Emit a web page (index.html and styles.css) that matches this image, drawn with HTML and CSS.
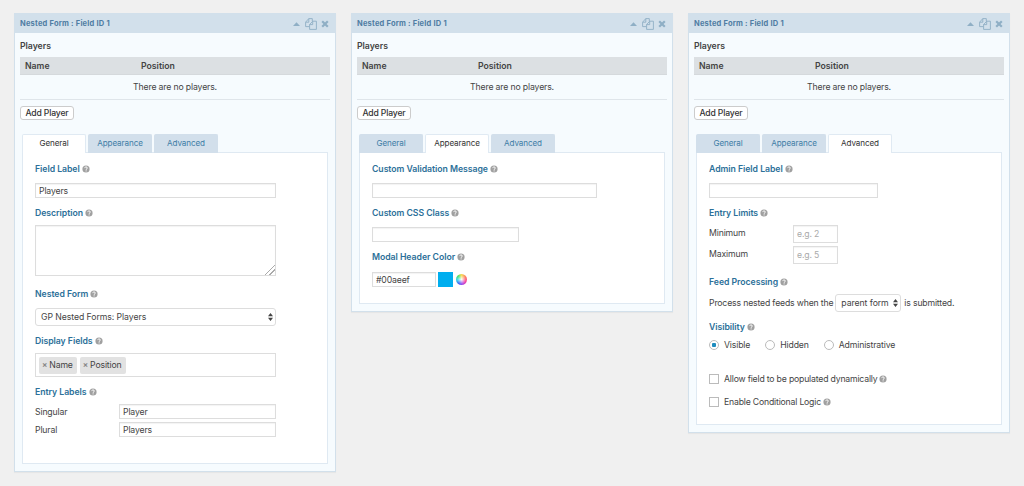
FILE: index.html
```
<!DOCTYPE html>
<html lang="en">
	<head>
		<meta charset="UTF-8" />
		<meta name="viewport" content="width=device-width, initial-scale=1.0" />
		<title>Nested Form Field Settings</title>
		<link rel="stylesheet" href="styles.css">
	</head>
	<body>
		<!-- shared icons -->
		<svg class="sprite" width="0" height="0">
			<symbol id="icon-up" viewBox="0 0 7 4"><path d="M0 4 3.5 0.3 7 4z" fill="currentColor" /></symbol>
			<symbol id="icon-copy" viewBox="0 0 12 12">
				<path d="M4.3 8.6H.6V4.2L3.8.6h3.5v2.6M.6 4.2h3.2V.6M4.6 6.6l3.1-3.4h3.7v8.2H4.6zM4.6 6.6h3.1V3.2" fill="none" stroke="currentColor" stroke-width="0.9" stroke-linejoin="round" />
			</symbol>
			<symbol id="icon-close" viewBox="0 0 8 8"><path d="M1.2 1.2 6.8 6.8M6.8 1.2 1.2 6.8" stroke="currentColor" stroke-width="2.2" /></symbol>
			<symbol id="icon-help" viewBox="0 0 8 8">
				<circle cx="4" cy="4" r="3.6" fill="#a0a0a0" />
				<path d="M2.8 3.1C2.9 2.2 3.4 1.9 4 1.9c.8 0 1.3.5 1.3 1.1C5.3 3.9 4.1 3.9 4.1 4.8M4.1 5.4v1" fill="none" stroke="#fff" stroke-width="1" />
			</symbol>
			<symbol id="icon-sort" viewBox="0 0 5 8"><path d="M0 3.3 2.5 0 5 3.3zM0 4.7h5L2.5 8z" fill="#444" /></symbol>
		</svg>

		<div class="panel">
			<div class="panel-header">
				<span class="panel-title">Nested Form : Field ID 1</span>
				<svg class="icon-up"><use href="#icon-up" /></svg>
				<svg class="icon-copy"><use href="#icon-copy" /></svg>
				<svg class="icon-close"><use href="#icon-close" /></svg>
			</div>
			<div class="panel-body">
				<div class="preview-label">Players</div>
				<div class="table-head"><span>Name</span><span>Position</span></div>
				<div class="table-empty">There are no players.</div>
				<button class="add-btn">Add Player</button>
				<div class="tabs">
					<div class="tab active">General</div>
					<div class="tab">Appearance</div>
					<div class="tab">Advanced</div>
				</div>
				<div class="settings settings-general">
					<div class="label">Field Label <svg class="help"><use href="#icon-help" /></svg></div>
					<input class="input" type="text" value="Players" />

					<div class="label tight">Description <svg class="help"><use href="#icon-help" /></svg></div>
					<textarea class="textarea"></textarea>

					<div class="label nested-label">Nested Form <svg class="help"><use href="#icon-help" /></svg></div>
					<div class="select"><span>GP Nested Forms: Players</span><svg class="sort"><use href="#icon-sort" /></svg></div>

					<div class="label tight">Display Fields <svg class="help"><use href="#icon-help" /></svg></div>
					<div class="tag-box">
						<span class="tag"><i>×</i>Name</span>
						<span class="tag"><i>×</i>Position</span>
					</div>

					<div class="label tight">Entry Labels <svg class="help"><use href="#icon-help" /></svg></div>
					<div class="row"><span>Singular</span><input class="input" type="text" value="Player" /></div>
					<div class="row"><span>Plural</span><input class="input" type="text" value="Players" /></div>
				</div>
			</div>
		</div>

		<div class="panel">
			<div class="panel-header">
				<span class="panel-title">Nested Form : Field ID 1</span>
				<svg class="icon-up"><use href="#icon-up" /></svg>
				<svg class="icon-copy"><use href="#icon-copy" /></svg>
				<svg class="icon-close"><use href="#icon-close" /></svg>
			</div>
			<div class="panel-body">
				<div class="preview-label">Players</div>
				<div class="table-head"><span>Name</span><span>Position</span></div>
				<div class="table-empty">There are no players.</div>
				<button class="add-btn">Add Player</button>
				<div class="tabs">
					<div class="tab">General</div>
					<div class="tab active">Appearance</div>
					<div class="tab">Advanced</div>
				</div>
				<div class="settings settings-appearance">
					<div class="label">Custom Validation Message <svg class="help"><use href="#icon-help" /></svg></div>
					<input class="input input-message" type="text" />

					<div class="label">Custom CSS Class <svg class="help"><use href="#icon-help" /></svg></div>
					<input class="input input-class" type="text" />

					<div class="label">Modal Header Color <svg class="help"><use href="#icon-help" /></svg></div>
					<div class="color-row">
						<input class="input input-color" type="text" value="#00aeef" />
						<span class="swatch"></span>
						<span class="wheel"></span>
					</div>
				</div>
			</div>
		</div>

		<div class="panel">
			<div class="panel-header">
				<span class="panel-title">Nested Form : Field ID 1</span>
				<svg class="icon-up"><use href="#icon-up" /></svg>
				<svg class="icon-copy"><use href="#icon-copy" /></svg>
				<svg class="icon-close"><use href="#icon-close" /></svg>
			</div>
			<div class="panel-body">
				<div class="preview-label">Players</div>
				<div class="table-head"><span>Name</span><span>Position</span></div>
				<div class="table-empty">There are no players.</div>
				<button class="add-btn">Add Player</button>
				<div class="tabs">
					<div class="tab">General</div>
					<div class="tab">Appearance</div>
					<div class="tab active">Advanced</div>
				</div>
				<div class="settings settings-advanced">
					<div class="label">Admin Field Label <svg class="help"><use href="#icon-help" /></svg></div>
					<input class="input input-admin" type="text" />

					<div class="label tight">Entry Limits <svg class="help"><use href="#icon-help" /></svg></div>
					<div class="row limit"><span>Minimum</span><input class="input" type="text" placeholder="e.g. 2" /></div>
					<div class="row limit"><span>Maximum</span><input class="input" type="text" placeholder="e.g. 5" /></div>

					<div class="label tight feed-label">Feed Processing <svg class="help"><use href="#icon-help" /></svg></div>
					<div class="feed-row">
						<span>Process nested feeds when the</span>
						<div class="select"><span>parent form</span><svg class="sort"><use href="#icon-sort" /></svg></div>
						<span>is submitted.</span>
					</div>

					<div class="label tight">Visibility <svg class="help"><use href="#icon-help" /></svg></div>
					<div class="radio-row">
						<label><span class="radio checked"></span>Visible</label>
						<label><span class="radio"></span>Hidden</label>
						<label><span class="radio"></span>Administrative</label>
					</div>

					<div class="check-row"><span class="check"></span>Allow field to be populated dynamically <svg class="help"><use href="#icon-help" /></svg></div>
					<div class="check-row"><span class="check"></span>Enable Conditional Logic <svg class="help"><use href="#icon-help" /></svg></div>
				</div>
			</div>
		</div>
	</body>
</html>
```

FILE: styles.css
```
* {
	box-sizing: border-box;
}

body {
	display: flex;
	align-items: flex-start;
	gap: 15px;
	margin: 0;
	padding: 13px 14px;
	background: #f0f0f0;
	color: #444;
	font-family: Inter, "Liberation Sans", sans-serif;
	font-size: 8.7px;
	letter-spacing: -0.15px;
	line-height: 12px;
}

.sprite {
	position: absolute;
}

.panel {
	width: 322px;
	flex: none;
	background: #f6fbfe;
	border: 1px solid #d2e0eb;
	box-shadow: 0 1px 1px rgba(0, 0, 0, 0.04);
}

.panel-header {
	display: flex;
	align-items: center;
	height: 19px;
	padding: 0 6px 0 5px;
	background: #d2e0eb;
	color: #8fafc5;
}

.panel-title {
	flex: 1;
	color: #4f7da3;
	font-size: 7.5px;
	font-weight: 700;
	letter-spacing: 0.21px;
}

.icon-up {
	width: 7px;
	height: 4px;
	margin-right: 5px;
}

.icon-copy {
	width: 12px;
	height: 12px;
	margin-right: 4px;
}

.icon-close {
	width: 8px;
	height: 8px;
}

.panel-body {
	padding: 7px 5px;
}

.preview-label {
	height: 17px;
	font-weight: 600;
	letter-spacing: -0.02px;
}

.table-head {
	display: grid;
	grid-template-columns: 116px 1fr;
	align-items: center;
	height: 18px;
	padding: 0 5px;
	background: #dce0e3;
	border-bottom: 1px solid #d5d9dc;
	font-weight: 600;
	letter-spacing: 0;
}

.table-empty {
	height: 25px;
	border-bottom: 1px solid #dfe5ea;
	line-height: 24px;
	text-align: center;
}

.add-btn {
	display: block;
	width: 54px;
	height: 14px;
	margin: 6px 0 14px;
	padding: 0;
	border: 1px solid #ccc;
	border-radius: 3px;
	background: #fff;
	color: #333;
	font: 500 8.6px/12px Inter, "Liberation Sans", sans-serif;
	letter-spacing: -0.15px;
	white-space: nowrap;
}

.tabs {
	display: flex;
	gap: 2px;
	margin: 0 2px -1px;
}

.tab {
	width: 64px;
	height: 19px;
	border: 1px solid #d2dfeb;
	border-bottom: 0;
	border-radius: 2px 2px 0 0;
	background: #d2dfeb;
	color: #3e7da6;
	font-size: 8.1px;
	letter-spacing: -0.1px;
	line-height: 17px;
	text-align: center;
}

.tab.active {
	position: relative;
	border-color: #e0eaf3;
	background: #fff;
	color: #333;
}

.settings {
	margin: 0 2px;
	padding: 10px 12px 0;
	border: 1px solid #dfe9f2;
	background: #fff;
}

.settings-general {
	height: 312px;
}

.settings-appearance {
	height: 152px;
}

.settings-advanced {
	height: 273px;
}

.label {
	display: flex;
	align-items: center;
	gap: 2px;
	height: 12px;
	margin: 9px 0 8px;
	color: #2c7099;
	font-weight: 600;
	letter-spacing: -0.04px;
	white-space: nowrap;
}

.label:first-child {
	margin-top: 0;
}

.label.tight {
	margin-bottom: 6px;
}

.nested-label,
.feed-label {
	margin-top: 12px;
}

.help {
	width: 8px;
	height: 8px;
	flex: none;
}

.input,
.textarea {
	display: block;
	width: 241px;
	height: 15px;
	margin: 0;
	padding: 0 3px;
	border: 1px solid #ddd;
	border-radius: 0;
	outline: 0;
	background: #fff;
	box-shadow: inset 0 1px 1px rgba(0, 0, 0, 0.05);
	color: #444;
	font: 8.7px Inter, "Liberation Sans", sans-serif;
	letter-spacing: -0.15px;
}

.input::placeholder {
	color: #aaa;
}

.textarea {
	height: 51px;
	resize: both;
}

.textarea::-webkit-resizer {
	background: linear-gradient(135deg, transparent 65%, #aaa 65%, #aaa 70%, transparent 70%, transparent 80%, #aaa 80%, #aaa 86%, transparent 86%);
}

.select {
	display: flex;
	align-items: center;
	justify-content: space-between;
	width: 241px;
	height: 18px;
	padding: 0 2px 0 5px;
	border: 1px solid #ddd;
	border-radius: 3px;
	background: #fff;
	letter-spacing: -0.07px;
	white-space: nowrap;
}

.sort {
	width: 5px;
	height: 8px;
}

.tag-box {
	display: flex;
	align-items: center;
	gap: 3px;
	width: 241px;
	height: 24px;
	padding: 0 3px;
	border: 1px solid #ddd;
}

.tag {
	height: 17px;
	padding: 0 4px 0 3px;
	border-radius: 2px;
	background: #e2e2e2;
	line-height: 17px;
}

.tag i {
	margin-right: 2px;
	color: #888;
	font-size: 8px;
	font-style: normal;
	font-weight: 700;
}

.row {
	display: flex;
	align-items: center;
	width: 241px;
	margin-bottom: 3px;
}

.row span {
	width: 84px;
}

.row .input {
	width: 157px;
}

.row.limit span {
	padding-bottom: 2px;
}

.row.limit .input {
	width: 45px;
	height: 18px;
}

.input-message {
	width: 225px;
}

.input-class {
	width: 147px;
}

.color-row {
	display: flex;
	align-items: center;
	margin-top: 9px;
}

.input-color {
	width: 64px;
}

.swatch {
	width: 15px;
	height: 15px;
	margin: 0 3px 0 2px;
	background: #00aeef;
}

.wheel {
	width: 11px;
	height: 11px;
	border-radius: 50%;
	background:
		radial-gradient(circle, rgba(255, 255, 255, 0.9) 5%, rgba(255, 255, 255, 0) 60%),
		conic-gradient(#f5d84a, #ff6a6a 20%, #f43fa0 33%, #a04af0 48%, #3f6cf5 60%, #30d5e8 74%, #4be36a 88%, #f5d84a);
}

.input-admin {
	width: 169px;
}

.feed-row {
	display: flex;
	align-items: center;
	letter-spacing: -0.17px;
	white-space: nowrap;
}

.feed-row .select {
	width: 66px;
	margin: 0 3px 0 2px;
}

.radio-row {
	display: flex;
	gap: 15px;
	height: 12px;
	margin-bottom: 22px;
}

.radio-row label,
.check-row {
	display: flex;
	align-items: center;
	white-space: nowrap;
}

.radio,
.check {
	width: 10px;
	height: 10px;
	margin-right: 5px;
	border: 1px solid #bbb;
	background: #fff;
}

.radio {
	border-radius: 50%;
}

.radio.checked {
	background: radial-gradient(circle, #1e8cbe 2px, #fff 2.5px);
}

.check-row {
	height: 12px;
	margin-bottom: 11px;
	letter-spacing: -0.19px;
}

.check-row .help {
	margin-left: 2px;
}
```
